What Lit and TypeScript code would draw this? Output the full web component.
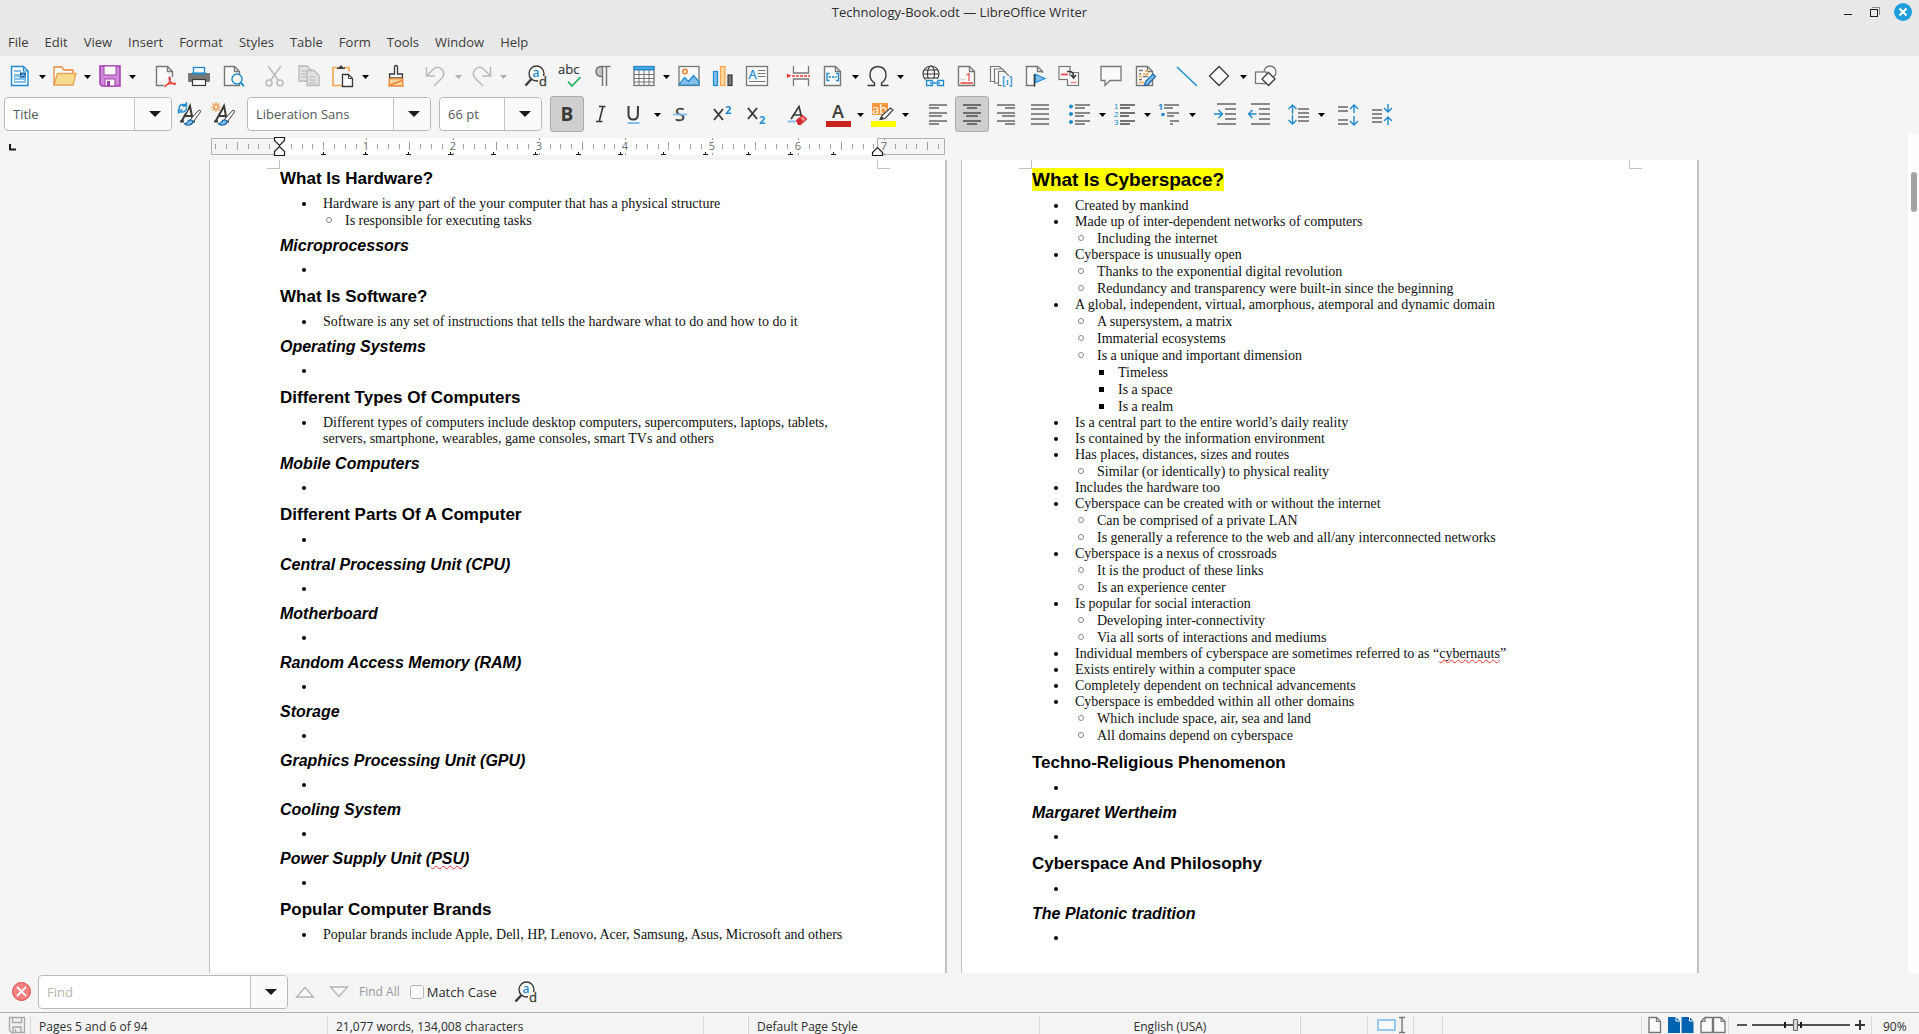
import { LitElement, html, css, svg, nothing } from "lit";
import type { TemplateResult } from "lit";
import { customElement } from "lit/decorators.js";
import { classMap } from "lit/directives/class-map.js";

const G = "#797774";
const D = "#3a3a38";
const B = "#1e8bcd";
const L = "#83beec";
const W = "#fafafa";
const F = "Open Sans, Noto Sans, sans-serif";

const pageShape = (x = 3.5, w = 16) => svg`
  <path d="M${x} 2.5h${w - 5}l5 5v14h-${w}z" fill=${W} stroke=${G} stroke-width="1.4" />
  <path d="M${x + w - 5} 2.5v5h5" fill="none" stroke=${G} stroke-width="1.4" />`;

const hLines = (rows: number[][], color = G, sw = 2) =>
  rows.map(([x1, x2, y]) => svg`<path d="M${x1} ${y}H${x2}" stroke=${color} stroke-width=${sw} />`);

const arrowUp = (x: number, y1: number, y2: number) => svg`
  <path d="M${x} ${y2}V${y1}M${x - 4} ${y1 + 4}L${x} ${y1}l4 4" fill="none" stroke=${B} stroke-width="1.4" />`;
const arrowDown = (x: number, y1: number, y2: number) => svg`
  <path d="M${x} ${y1}V${y2}M${x - 4} ${y2 - 4}L${x} ${y2}l4 -4" fill="none" stroke=${B} stroke-width="1.4" />`;

const findIcon = svg`
  <circle cx="12.500" cy="9.500" r="7.500" fill=${W} stroke=${D} stroke-width="1.400" />
  <rect x="14" y="12" width="10" height="11" fill="#f5f5f5" />
  <path d="M7.500 15L1.500 21.500" stroke=${D} stroke-width="2.400" />
  <text x="8.500" y="13" font-family=${F} font-size="12" font-weight="600" fill=${B}>a</text>
  <text x="15" y="22" font-family=${F} font-size="13" fill=${D} stroke=${D} stroke-width="0.300">d</text>`;

const styleA = svg`
  <path d="M3 19.500h4M14 19.500h4M4.500 19.500L13 4l3 15.500M8 14h7" fill="none" stroke=${D} stroke-width="2" />
  <path d="M13 18L20.500 9.500q2-2 2.800-1q.7 1-.8 3L16 20z" fill=${W} stroke=${D} stroke-width="1" />
  <path d="M7.500 21.500q3.500-.5 4-3q3-1.500 4.500 1q0 3-4.500 3.500q-3 .3-4-1.500z" fill=${L} stroke="#0c5fa8" stroke-width="1.200" />`;

const ICONS: Record<string, TemplateResult | TemplateResult[]> = {
  new: svg`<path d="M3.500 2.500h12l4.500 4.500v14.500h-16.500z" fill=${W} stroke=${B} stroke-width="1.400" />
    <path d="M15.500 2.500v4.500h4.500" fill="none" stroke=${B} stroke-width="1.200" />
    <path d="M6 6h7v2h-7z M6 10h6v2h-6z M6 10h12v9h-12z" fill=${L} />
    <rect x="12" y="8.500" width="6" height="5" fill="#1565a8" /><path d="M13 12.500l2-2 2 2" stroke="#fff" fill="none" />
    <path d="M7 13.500h4M7 16.500h9" stroke="#fff" />`,
  open: svg`<path d="M1 21V3h8l2 3h9v3.500" fill=${W} stroke="#e8863a" stroke-width="1.300" />
    <path d="M1 21L4.500 9.500h18.500L20 21z" fill="#f8db8f" stroke="#e8a352" stroke-width="1.300" />`,
  save: svg`<path d="M2 2h20v20h-18l-2-2z" fill="#d08bd8" stroke="#a03fae" stroke-width="1.500" />
    <rect x="6" y="2" width="12" height="9" fill="#fafafa" stroke="#a03fae" />
    <rect x="7" y="15" width="10" height="7" fill="#fafafa" stroke="#a03fae" /><rect x="9" y="17" width="3" height="5" fill="#a03fae" />`,
  pdf: svg`${pageShape()}<rect x="11" y="13" width="12" height="10" fill="#f5f5f5" />
    <path d="M17 13q-1.500 0-.5 3q1.200 3.500 6 4.500M17.500 13.500q0 5-6 9.500M12 21.500q4-2.500 11-2" fill="none" stroke="#ed3d3b" stroke-width="1.300" />`,
  print: svg`<rect x="6.500" y="3.500" width="11" height="6" fill=${W} stroke=${B} stroke-width="1.300" />
    <rect x="1" y="9" width="22" height="9" rx="1" fill=${G} /><path d="M5 9.500h14" stroke=${B} stroke-width="2" />
    <rect x="5.500" y="15.500" width="13" height="6" fill=${W} stroke=${D} stroke-width="1.200" />`,
  preview: svg`${pageShape(3.5, 15)}<circle cx="16" cy="15" r="5" fill=${W} stroke=${B} stroke-width="1.400" />
    <path d="M19.500 18.500L23 22" stroke=${B} stroke-width="1.800" />`,
  cut: svg`<g fill="none" stroke="#bababa" stroke-width="1.500"><path d="M5 2l10.500 14.500M18 2L7.500 16.500" /><circle cx="6" cy="19" r="3" /><circle cx="17" cy="19" r="3" /></g>`,
  copy: svg`<g fill="#e2e2e2" stroke="#b8b8b8" stroke-width="1.300"><path d="M2 2h8l4 4v11h-12z" /><path d="M10 6.500h7l5 5v10h-12z" /></g>
    <path d="M4 7h5M4 10h5M4 13h5M12 13h7M12 16h7M12 19h7" stroke="#b8b8b8" />`,
  paste: svg`<path d="M7 3.500h-5v18h9M13 3.500h5v4" fill="none" stroke="#f2a850" stroke-width="1.700" />
    <path d="M6 5h8v-1.500h-2q-.5-2-2-2t-2 2h-2z" fill=${D} />
    <path d="M11.500 10.500h6l4 4v8h-10z" fill=${W} stroke=${D} stroke-width="1.300" /><path d="M17.500 10.500v4h4" fill="none" stroke=${D} />`,
  brush: svg`<path d="M10.500 10V3q0-1.500 1.500-1.500t1.500 1.500v7h5v4H5.500v-4z" fill=${W} stroke=${D} stroke-width="1.300" />
    <path d="M5.500 14.500h13l.5 7.500H5z" fill="#fbd59a" stroke="#e8863a" stroke-width="1.300" /><path d="M5 21.500l13-5" stroke="#e8863a" stroke-width="1.500" />`,
  undo: svg`<path d="M2.500 3v9h8.500M3 11.500L9 5.500q5-4.500 9 0q3.500 4 0 8.500L10 22" fill="none" stroke="#bababa" stroke-width="1.500" />`,
  redo: svg`<path d="M21.500 3v9h-8.500M21 11.500L15 5.500q-5-4.500-9 0q-3.500 4 0 8.500L14 22" fill="none" stroke="#bababa" stroke-width="1.500" />`,
  find: findIcon,
  spell: svg`<text x="0" y="10" font-family=${F} font-size="13" fill=${D} stroke=${D} stroke-width="0.200">abc</text>
    <path d="M10 17.500l4 4.500L22.500 13" fill="none" stroke="#1db35b" stroke-width="1.700" />`,
  pilcrow: svg`<path d="M10 12.500q-6 0-6-5t6-5z" fill="#c8c8c8" /><path d="M18.500 2.500H10q-6 0-6 5t6 5M10.500 2.500V22M14.500 2.500V22" fill="none" stroke=${G} stroke-width="1.500" />`,
  table: svg`<rect x="2" y="2.500" width="20" height="19" fill=${W} stroke=${G} stroke-width="1.300" />
    <path d="M2 10.500h20M2 14.500h20M2 18h20M7 6v15M12 6v15M17 6v15" stroke=${G} /><rect x="1.500" y="2" width="21" height="4.500" fill=${B} /><path d="M3 4h18" stroke=${L} />`,
  image: svg`<rect x="2" y="2.500" width="20" height="19" fill=${W} stroke=${G} stroke-width="1.300" />
    <path d="M2.500 21v-1l5-6.500 4 4 5-6 5.500 6v3.500z" fill=${L} stroke=${B} stroke-width="1.200" /><circle cx="8" cy="7.500" r="2.300" fill="#fff3dc" stroke="#e8863a" stroke-width="1.500" />`,
  chart: svg`<rect x="2.500" y="7.500" width="4" height="14" fill=${L} stroke=${B} stroke-width="1.200" />
    <rect x="9.500" y="2.500" width="4.500" height="19" fill="#fbd59a" stroke="#f2a850" stroke-width="1.200" /><rect x="17" y="11" width="4" height="10.500" fill=${G} stroke=${D} stroke-width="1.200" />`,
  textbox: svg`<rect x="1.500" y="2.500" width="21" height="19" fill=${W} stroke=${G} stroke-width="1.300" />
    <text x="3.500" y="15" font-family=${F} font-size="13" fill=${B} stroke=${B} stroke-width="0.300">A</text>
    <path d="M13 6.500h7.500M13 9.500h7.500M13 12.500h7.500M4 17.500h16.500" stroke=${G} stroke-width="1.200" />`,
  pagebreak: svg`<path d="M6.500 2v7h15v-7M6.500 22v-7h15v7" fill=${W} stroke=${G} stroke-width="1.300" />
    <path d="M0 9.500v4.500l4.500-2.200z" fill="#ed3d3b" /><path d="M5 12h18" stroke="#ed3d3b" stroke-width="1.500" stroke-dasharray="3 1" />`,
  field: svg`${pageShape()}<path d="M8.500 9.500h-2.500v7h2.500M15 9.500h2.500v7h-2.500" fill="none" stroke=${B} stroke-width="1.300" /><path d="M7.500 13h8.500" stroke=${B} stroke-width="1.500" stroke-dasharray="2.500 1" />`,
  omega: svg`<path d="M1.500 21.500h7v-2.500q-4.500-3-4.500-8q0-8 8-8.500q8 .5 8 8.500q0 5-4.500 8v2.500h7" fill="none" stroke=${D} stroke-width="1.400" />`,
  link: svg`<g fill="none" stroke=${D} stroke-width="1.100"><circle cx="10" cy="10" r="8" /><ellipse cx="10" cy="10" rx="3.500" ry="8" /><path d="M2 10h16M3 6h14M3 14h14" /></g>
    <rect x="4.500" y="15" width="19" height="8.500" fill="#f5f5f5" />
    <path d="M11.500 16.500h-6v5h6v-1.500M11.500 18v-1.500M16.500 16.500h6v5h-6v-1.500M16.500 18v-1.500M9 19h10" fill="none" stroke=${B} stroke-width="1.300" />`,
  footnote: svg`${pageShape()}<path d="M5.500 19h12.500" stroke="#ed6d6b" stroke-width="2" /><path d="M5.500 15.500h5" stroke="#d0d0d0" stroke-width="1.500" />
    <text x="10.500" y="16.500" font-family=${F} font-size="11" font-weight="600" fill="#ee5a58">1</text>`,
  endnote: svg`<g fill=${W} stroke=${G} stroke-width="1.200"><path d="M1.500 2.500h9l3 3v12h-12z" /><path d="M5.500 5h8l3 3v11h-11z" /><path d="M9.500 7.500h6l4 4v10h-10z" /></g>
    <rect x="13" y="12" width="11" height="11" fill="#f5f5f5" /><path d="M16.500 13h-2v9h2M20.500 13h2v9h-2M18.500 16v5" fill="none" stroke="#4fa3dc" stroke-width="1.500" />`,
  bookmark: svg`${pageShape()}<rect x="11" y="9" width="12" height="14" fill="#f5f5f5" /><path d="M11.500 10v12.500" stroke=${D} stroke-width="1.700" /><path d="M12.500 10.500v8l9.500-4z" fill=${L} stroke=${B} stroke-width="1.200" />`,
  crossref: svg`<rect x="2" y="2.500" width="11" height="13" fill=${W} stroke=${G} stroke-width="1.200" /><path d="M4 10.500h7" stroke="#ee5a58" stroke-width="2" />
    <path d="M10.500 15.500v6h11v-13h-6" fill=${W} stroke=${G} stroke-width="1.200" /><path d="M13.500 18.500h6" stroke="#ee8a88" stroke-width="1.500" />
    <path d="M10 7.500h2.500q4 0 4 5M14 11l2.500 3 2.500-3" fill="none" stroke=${D} stroke-width="1.500" />`,
  comment: svg`<path d="M2 2.500h20v14h-11l-5 5v-5h-4z" fill=${W} stroke=${G} stroke-width="1.300" />`,
  track: svg`${pageShape()}<path d="M6 6.500h4M6 10h2M10 12.500h5M6 15.500h3" stroke=${G} stroke-width="1.500" /><path d="M12 7h3M10 10h6M6 12.500h3M6 18.500h5" stroke="#f2a850" stroke-width="1.500" />
    <path d="M11.500 21.500l1-4L20 10l2.500 2.500-7.500 8z" fill=${L} stroke="#1565a8" stroke-width="1.200" />`,
  line: svg`<path d="M2 3l20 19" stroke=${B} stroke-width="1.400" />`,
  diamond: svg`<path d="M10 2.500l9.500 9.500-9.500 9.500-9.500-9.500z" fill=${W} stroke=${D} stroke-width="1.300" />`,
  shapes: svg`<g fill=${W} stroke=${G} stroke-width="1.300"><circle cx="16" cy="8" r="6" /><rect x="1.500" y="8" width="11" height="11.500" /><path d="M14.500 8.500l6.500 6.500-6.500 6.500-6.500-6.500z" stroke=${D} /></g>`,
  styleUpdate: svg`${styleA}<circle cx="5.500" cy="6" r="5.500" fill="#f5f5f5" /><path d="M2 7q0-4.500 4-4.500h3M9.500 0v4h-4M9.500 5.500q0 4.500-4 4.500h-4M1.500 11.500V8h4" fill="none" stroke=${B} stroke-width="1.400" />`,
  styleNew: svg`${styleA}<circle cx="5" cy="5" r="5.500" fill="#f5f5f5" /><path d="M5 0v10M0 5h10M1.500 1.500l7 7M8.500 1.500l-7 7" stroke="#f08c3a" stroke-width="1.200" /><circle cx="5" cy="5" r="2" fill="#fff" stroke="#f08c3a" />`,
  bold: svg`<text x="5.500" y="18.500" font-family=${F} font-size="19" font-weight="700" fill=${D}>B</text>`,
  italic: svg`<path d="M10 4.500h6.500M7 19.500h6.500M14 4.500l-3.800 15" fill="none" stroke=${D} stroke-width="1.600" />`,
  underline: svg`<path d="M5.500 4v8.500q0 5 4.700 5t4.700-5V4" fill="none" stroke=${D} stroke-width="2" /><path d="M4.500 21h12" stroke=${L} stroke-width="2" />`,
  strike: svg`<text x="7" y="18.500" font-family=${F} font-size="18" fill=${D} stroke=${D} stroke-width="0.400">S</text><path d="M5 12.500h14" stroke=${L} stroke-width="1.800" />`,
  superscript: svg`<path d="M4 7l9 11M13 7L4 18" stroke=${D} stroke-width="1.900" /><text x="15" y="12" font-family=${F} font-size="11" font-weight="700" fill=${B}>2</text>`,
  subscript: svg`<path d="M4 6l9 11M13 6L4 17" stroke=${D} stroke-width="1.900" /><text x="15" y="22" font-family=${F} font-size="11" font-weight="700" fill=${B}>2</text>`,
  clear: svg`<path d="M5 17L13 4.500l2.500 10M8 13h6.500" fill="none" stroke=${D} stroke-width="1.700" /><path d="M1.500 19.500h8" stroke=${L} stroke-width="2" />
    <path d="M10.500 18.500l6-5 4 3.500-6 5.500h-2z" fill="#f28f8d" stroke="#d3282b" stroke-width="1.200" /><path d="M11 18.500l3.500-2.500 2.500 3.500-3 2.500h-2z" fill="#d3282b" />`,
  fontColor: svg`<text x="6" y="16" font-family=${F} font-size="18" font-weight="600" fill=${D}>A</text><rect x="0" y="19" width="25" height="6" fill="#c9211e" />`,
  highlight: svg`<rect x="1" y="1" width="16" height="12" fill="#fb983f" /><text x="1" y="12" font-family=${F} font-size="13" fill="#fff">ab</text>
    <path d="M9 17.500l2-4L19.500 6l2.500 2-8 8.500z" fill=${W} stroke=${D} stroke-width="1.100" /><path d="M9 18l1.500-4 3 2.500z" fill=${D} /><rect x="0" y="19" width="25" height="6" fill="#ffff00" />`,
  alignLeft: svg`${hLines([[3, 21, 3], [3, 13, 6], [3, 21, 11], [3, 16, 14], [3, 21, 19], [3, 13, 22]], "#8b8987")}`,
  alignCenter: svg`${hLines([[3, 21, 3], [7, 17, 6], [3, 21, 11], [6, 18, 14], [3, 21, 19], [7, 17, 22]], "#6f6d6a")}`,
  alignRight: svg`${hLines([[3, 21, 3], [11, 21, 6], [3, 21, 11], [8, 21, 14], [3, 21, 19], [11, 21, 22]], "#8b8987")}`,
  justify: svg`${hLines([[3, 21, 3], [3, 21, 7], [3, 21, 12], [3, 21, 17], [3, 21, 22]], "#8b8987")}`,
  bullets: svg`${hLines([[7, 22, 3], [7, 17, 6], [7, 22, 11], [7, 16, 14], [7, 22, 19], [7, 17, 22]], "#8b8987")}
    <g fill=${B}><circle cx="3" cy="4.500" r="2" /><circle cx="3" cy="12" r="2" /><circle cx="3" cy="20" r="2" /></g>`,
  numbers: svg`${hLines([[7, 22, 3], [7, 17, 6], [7, 22, 11], [7, 16, 14], [7, 22, 19], [7, 17, 22]], D, 1.4)}
    <text fill=${B} font-family="Liberation Sans, Arial, sans-serif" font-size="8"><tspan x="1" y="7">1</tspan><tspan x="1" y="15">2</tspan><tspan x="1" y="23">3</tspan></text>`,
  outline: svg`${hLines([[6, 21, 3], [6, 15, 6], [9, 21, 11], [9, 16, 14], [12, 21, 19], [12, 15, 22]], "#8b8987")}
    <text x="0" y="8" font-family=${F} font-size="9" font-weight="700" fill=${B}>1</text><circle cx="5" cy="12.500" r="1.800" fill=${B} />`,
  indent: svg`${hLines([[4, 23, 2], [12, 23, 7], [12, 23, 12], [12, 23, 17], [4, 23, 22]], "#8b8987")}<path d="M1 12h8M5.500 8l4 4-4 4" fill="none" stroke=${B} stroke-width="1.400" />`,
  outdent: svg`${hLines([[4, 23, 2], [12, 23, 7], [12, 23, 12], [12, 23, 17], [4, 23, 22]], "#8b8987")}<path d="M1.500 12h8M5.500 8l-4 4 4 4" fill="none" stroke=${B} stroke-width="1.400" />`,
  spacing: svg`${arrowUp(5.5, 3, 12)}${arrowDown(5.5, 13, 22)}${hLines([[11, 22, 7], [11, 22, 11], [11, 22, 15], [11, 22, 19]], "#8b8987")}`,
  spaceInc: svg`${hLines([[0, 10, 5], [0, 10, 9], [0, 10, 18], [0, 10, 22]], "#8b8987")}${arrowUp(16, 3, 11)}${arrowDown(16, 14, 23)}`,
  spaceDec: svg`${hLines([[0, 10, 8], [0, 10, 12], [0, 10, 16], [0, 10, 20]], "#8b8987")}${arrowDown(16, 2, 10)}${arrowUp(16, 15, 23)}`,
};

interface Tool {
  icon: string;
  label: string;
  split?: boolean;
  pressed?: boolean;
  dim?: boolean;
}
type Item = Tool | "s" | "m" | "l";
const t = (icon: string, label: string, o: Partial<Tool> = {}): Tool => ({ icon, label, ...o });
const split = { split: true };

const STANDARD: Item[] = [
  t("new", "New", split), t("open", "Open", split), t("save", "Save", split), "l",
  t("pdf", "Export as PDF"), t("print", "Print"), t("preview", "Print Preview"), "m",
  t("cut", "Cut"), t("copy", "Copy"), t("paste", "Paste", split), "m",
  t("brush", "Clone Formatting"), "s",
  t("undo", "Undo", { split: true, dim: true }), t("redo", "Redo", { split: true, dim: true }), "l",
  t("find", "Find and Replace"), t("spell", "Check Spelling"), t("pilcrow", "Formatting Marks"), "s",
  t("table", "Insert Table", split), t("image", "Insert Image"), t("chart", "Insert Chart"), t("textbox", "Insert Text Box"), "m",
  t("pagebreak", "Insert Page Break"), t("field", "Insert Field", split), t("omega", "Special Character", split), "l",
  t("link", "Insert Hyperlink"), t("footnote", "Insert Footnote"), t("endnote", "Insert Endnote"), t("bookmark", "Insert Bookmark"), t("crossref", "Insert Cross-reference"), "m",
  t("comment", "Insert Comment"), t("track", "Track Changes"), "m",
  t("line", "Insert Line"), t("diamond", "Basic Shapes", split), t("shapes", "Draw Functions"),
];
const FORMATTING: Item[] = [
  t("bold", "Bold", { pressed: true }), t("italic", "Italic"), t("underline", "Underline", split), t("strike", "Strikethrough"), "m",
  t("superscript", "Superscript"), t("subscript", "Subscript"), "m",
  t("clear", "Clear Formatting"), "s",
  t("fontColor", "Font Color", split), t("highlight", "Highlighting Color", split), "l",
  t("alignLeft", "Align Left"), t("alignCenter", "Align Center", { pressed: true }), t("alignRight", "Align Right"), t("justify", "Justified"), "s",
  t("bullets", "Unordered List", split), t("numbers", "Ordered List", split), t("outline", "Outline", split), "l",
  t("indent", "Increase Indent"), t("outdent", "Decrease Indent"), "s",
  t("spacing", "Line Spacing", split), "s",
  t("spaceInc", "Increase Paragraph Spacing"), t("spaceDec", "Decrease Paragraph Spacing"),
];
const MENUS = ["File", "Edit", "View", "Insert", "Format", "Styles", "Table", "Form", "Tools", "Window", "Help"];

type Row = [1 | 2 | 3, string | TemplateResult];
interface Block {
  kind: "title" | "heading" | "sub";
  text: string | TemplateResult;
  rows: Row[];
}
const blk = (kind: Block["kind"], text: Block["text"], rows: Row[] = [[1, ""]]): Block => ({ kind, text, rows });
const typo = (s: string) => html`<span class="typo">${s}</span>`;

const LEFT: Block[] = [
  blk("heading", "What Is Hardware?", [
    [1, "Hardware is any part of the your computer that has a physical structure"],
    [2, "Is responsible for executing tasks"],
  ]),
  blk("sub", "Microprocessors"),
  blk("heading", "What Is Software?", [[1, "Software is any set of instructions that tells the hardware what to do and how to do it"]]),
  blk("sub", "Operating Systems"),
  blk("heading", "Different Types Of Computers", [
    [1, html`Different types of computers include desktop computers, supercomputers, laptops, tablets,<br />servers, smartphone, wearables, game consoles, smart TVs and others`],
  ]),
  blk("sub", "Mobile Computers"),
  blk("heading", "Different Parts Of A Computer"),
  blk("sub", "Central Processing Unit (CPU)"),
  blk("sub", "Motherboard"),
  blk("sub", "Random Access Memory (RAM)"),
  blk("sub", "Storage"),
  blk("sub", "Graphics Processing Unit (GPU)"),
  blk("sub", "Cooling System"),
  blk("sub", html`Power Supply Unit (${typo("PSU")})`),
  blk("heading", "Popular Computer Brands", [[1, "Popular brands include Apple, Dell, HP, Lenovo, Acer, Samsung, Asus, Microsoft and others"]]),
];
const RIGHT: Block[] = [
  blk("title", "What Is Cyberspace?", [
    [1, "Created by mankind"],
    [1, "Made up of inter-dependent networks of computers"],
    [2, "Including the internet"],
    [1, "Cyberspace is unusually open"],
    [2, "Thanks to the exponential digital revolution"],
    [2, "Redundancy and transparency were built-in since the beginning"],
    [1, "A global, independent, virtual, amorphous, atemporal and dynamic domain"],
    [2, "A supersystem, a matrix"],
    [2, "Immaterial ecosystems"],
    [2, "Is a unique and important dimension"],
    [3, "Timeless"],
    [3, "Is a space"],
    [3, "Is a realm"],
    [1, "Is a central part to the entire world’s daily reality"],
    [1, "Is contained by the information environment"],
    [1, "Has places, distances, sizes and routes"],
    [2, "Similar (or identically) to physical reality"],
    [1, "Includes the hardware too"],
    [1, "Cyberspace can be created with or without the internet"],
    [2, "Can be comprised of a private LAN"],
    [2, "Is generally a reference to the web and all/any interconnected networks"],
    [1, "Cyberspace is a nexus of crossroads"],
    [2, "It is the product of these links"],
    [2, "Is an experience center"],
    [1, "Is popular for social interaction"],
    [2, "Developing inter-connectivity"],
    [2, "Via all sorts of interactions and mediums"],
    [1, html`Individual members of cyberspace are sometimes referred to as “${typo("cybernauts")}”`],
    [1, "Exists entirely within a computer space"],
    [1, "Completely dependent on technical advancements"],
    [1, "Cyberspace is embedded within all other domains"],
    [2, "Which include space, air, sea and land"],
    [2, "All domains depend on cyberspace"],
  ]),
  blk("heading", "Techno-Religious Phenomenon"),
  blk("sub", "Margaret Wertheim"),
  blk("heading", "Cyberspace And Philosophy"),
  blk("sub", "The Platonic tradition"),
];

@customElement("app-root")
export class AppRoot extends LitElement {
  static styles = css`
    :host {
      display: flex;
      flex-direction: column;
      height: 100vh;
      overflow: hidden;
      background: #f5f5f5;
      color: #2e2e2e;
      font: 13px/18px "Open Sans", "Noto Sans", sans-serif;
    }
    *, ::before { box-sizing: border-box; }
    button {
      display: inline-flex;
      align-items: center;
      justify-content: center;
      border: 0;
      padding: 0;
      background: none;
      color: inherit;
      font: inherit;
    }
    svg { display: block; flex: none; overflow: visible; }
    h1, h2, h3, ul { margin: 0; padding: 0; }

    .titlebar {
      display: grid;
      grid-template-columns: 1fr auto 1fr;
      align-items: center;
      height: 24px;
      background: #e8e8e8;
    }
    .title { grid-column: 2; font-size: 13px; }
    .winbtns { display: flex; justify-content: flex-end; gap: 11px; padding-right: 7px; }
    .menubar { display: flex; gap: 16px; height: 32px; padding: 3px 8px 0; background: #e8e8e8; }
    .menubar button { color: #3c3c3c; }

    .toolbar { display: flex; align-items: center; padding-left: 3px; flex: none; }
    .standard { height: 40px; }
    .formatting { height: 36px; padding-left: 4px; }
    .tool { width: 34px; height: 36px; }
    .pressed { background: #cfcfcf; border: 1px solid #acacac; border-radius: 3px; }
    .split { display: flex; }
    .drop { width: 11px; height: 36px; }
    .s { width: 6px; }
    .m { width: 8px; }
    .l { width: 10px; }

    .combo {
      display: flex;
      height: 34px;
      border: 1px solid #b9b9b9;
      border-radius: 4px;
      background: #fff;
      overflow: hidden;
    }
    .combo input {
      flex: 1;
      min-width: 0;
      border: 0;
      padding: 0 8px;
      background: none;
      color: #55585a;
      font: inherit;
      outline: 0;
    }
    .combo input::placeholder { color: #b4b4b4; }
    .combo button { width: 37px; padding-left: 3px; border-left: 1px solid #c4c4c4; background: #fafafa; }
    .style-box { width: 168px; }
    .font-box { width: 184px; margin: 0 8px 0 7px; }
    .size-box { width: 103px; margin-right: 8px; }
    .find-box { width: 250px; }

    .work { display: flex; flex: 1; min-height: 0; }
    .canvas { flex: 1; display: flex; flex-direction: column; min-width: 0; }
    .ruler-row, .pages {
      display: grid;
      grid-template-columns: 1fr auto 1fr;
    }
    .ruler-row { height: 28px; flex: none; }
    .tabkind { padding: 11px 0 0 9px; }
    .spread { display: grid; grid-template-columns: 738px 738px; column-gap: 14px; }
    .ruler { padding: 4px 0 0 2px; }
    .pages { flex: 1; min-height: 0; }
    .pages .spread { grid-column: 2; min-height: 0; }
    .page {
      position: relative;
      overflow: hidden;
      padding: 8px 68px 0 70px;
      border-left: 1px solid #c2c2c2;
      border-right: 2px solid #c2c2c2;
      background: #fff;
      color: #000;
    }
    .corner { position: absolute; top: 0; width: 13px; height: 9px; border-bottom: 1px solid #c2c2c2; }
    .corner-l { left: 57px; border-right: 1px solid #c2c2c2; }
    .corner-r { left: 667px; border-left: 1px solid #c2c2c2; }

    .head-title, .head-heading, .head-sub {
      font-family: "Liberation Sans", Arial, sans-serif;
      font-weight: 700;
    }
    .head-title { margin-bottom: 7px; font-size: 19px; line-height: 23px; }
    .head-title mark { display: inline-block; background: #ff0; color: #000; }
    .head-heading { margin: 8px 0 6px; font-size: 17px; line-height: 22px; }
    .head-sub { margin: 6px 0; font-size: 16px; line-height: 21px; font-style: italic; }
    .first { margin-top: 0; }
    .list { list-style: none; font: 14px/17px "Liberation Serif", "Times New Roman", serif; }
    .row { display: flex; color: #111; }
    .row::before { content: ""; flex: none; }
    .lv1 { line-height: 16px; min-height: 16px; }
    .lv1::before { width: 4px; height: 4px; margin: 6px 17px 0 22px; border-radius: 50%; background: #000; }
    .lv2::before { width: 6px; height: 6px; margin: 5px 13px 0 46px; border: 1px solid #8a8a8a; border-radius: 50%; }
    .lv3::before { width: 5px; height: 5px; margin: 6px 14px 0 67px; background: #000; }
    .typo { text-decoration: underline wavy #f33 1px; text-decoration-skip-ink: none; }

    .scroll { width: 11px; margin-top: 2px; padding: 38px 2px 0 3px; background: #fdfdfd; }
    .thumb { height: 40px; border-radius: 3px; background: #a3a3a3; }

    .findbar { display: flex; align-items: center; flex: none; height: 39px; padding: 0 0 2px 12px; }
    .findbar .find-box { margin-left: 7px; }
    .nav { width: 34px; height: 34px; }
    .findall { margin-left: 3px; font-size: 12px; color: #9a9a9a; }
    .match { display: flex; align-items: center; gap: 3px; margin: 0 12px 0 10px; }
    .match input {
      appearance: none;
      width: 14px;
      height: 14px;
      margin: 0;
      border: 1px solid #b9b9b9;
      border-radius: 3px;
      background: #fff;
    }

    .status {
      display: grid;
      grid-template-columns: 31px 297fr 376fr 45px 291fr 261fr 67px 46px 29px 199fr 87px 143px 47px;
      flex: none;
      height: 22px;
      padding-top: 3px;
      border-top: 1px solid #b0b0b0;
      background: #f4f4f4;
      font-size: 12px;
      line-height: 21px;
      white-space: nowrap;
    }
    .cell { display: flex; height: 18px; padding-left: 8px; border-right: 1px solid #d8d8d8; overflow: visible; }
    .cell:last-child { border-right: 0; padding-left: 11px; }
    .mid { justify-content: center; padding-left: 0; }
    .views { gap: 6px; padding-left: 6px; }
    .zoomer { align-items: center; gap: 5px; }
  `;

  private icon(name: string) {
    return html`<svg width="24" height="26" viewBox="0 0 24 26" aria-hidden="true">${svg`<g transform="translate(0 1)">${ICONS[name]}</g>`}</svg>`;
  }

  private tri(big = false, color = "#000") {
    return big
      ? html`<svg width="12" height="6" viewBox="0 0 12 6"><path d="M0 0h12l-6 6z" fill="#1c1c1c" /></svg>`
      : html`<svg width="7" height="6" viewBox="0 0 7 6"><path d="M0 2h7l-3.500 4z" fill=${color} /></svg>`;
  }

  private item(i: Item) {
    if (typeof i === "string") return html`<span class=${i}></span>`;
    const main = html`<button class=${classMap({ tool: true, pressed: !!i.pressed })} aria-label=${i.label} aria-pressed=${i.pressed ? "true" : nothing}>
      ${this.icon(i.icon)}
    </button>`;
    return i.split
      ? html`<span class="split">${main}<button class="drop" aria-label=${i.label + " options"}>${this.tri(false, i.dim ? "#b0b0b0" : "#000")}</button></span>`
      : main;
  }

  private combo(cls: string, label: string, value: string, placeholder = "") {
    return html`<div class="combo ${cls}">
      <input type="text" aria-label=${label} .value=${value} placeholder=${placeholder} />
      <button aria-label=${label + " list"}>${this.tri(true)}</button>
    </div>`;
  }

  private ruler() {
    const inch = 86.3;
    const ticks: TemplateResult[] = [];
    for (let n = -6; n <= 61; n++) {
      const x = Math.round(69 + (n * inch) / 8) + 0.5;
      if (n === 0 || x > 731) continue;
      if (n % 8 === 0) {
        ticks.push(svg`<path d="M${x} 2v2M${x} 17v2" stroke="#9a9a9a" />
          <text x=${x - 0.5} y="14" text-anchor="middle" font-family=${F} font-size="11" fill="#6a6a6a">${n / 8}</text>`);
      } else {
        ticks.push(n % 4 === 0 ? svg`<path d="M${x} 6v8" stroke="#a0a0a0" />` : svg`<path d="M${x} 8v5" stroke="#a0a0a0" />`);
      }
    }
    const stops: TemplateResult[] = [];
    for (let n = 1; n <= 13; n++) {
      const x = Math.round(69 + n * 42.5);
      stops.push(svg`<path d="M${x} 16h1v2h2v1h-5v-1h2z" fill="#1c1c1c" />`);
    }
    return html`<svg width="736" height="22" viewBox="0 0 736 22" role="img" aria-label="Ruler">
      <rect x="69" y="2" width="597" height="17" fill="#fff" />
      <path d="M69 2.500H.5v16H69M666.500 18.500V2.500H733.500v16h-67" fill="none" stroke="#b0b0b0" />
      ${ticks}${stops}
      <g fill="#fff" stroke="#1c1c1c" stroke-width="1.200">
        <path d="M63.500 1.500h10v3l-5 5-5-5z" /><path d="M63.500 19.500h10v-4l-5-5-5 5z" /><path d="M661.500 19.500h10v-3l-5-5-5 5z" />
      </g>
    </svg>`;
  }

  private block(b: Block, first: boolean) {
    const cls = `head-${b.kind}${first ? " first" : ""}`;
    const head =
      b.kind === "title"
        ? html`<h1 class=${cls}><mark>${b.text}</mark></h1>`
        : b.kind === "heading"
          ? html`<h2 class=${cls}>${b.text}</h2>`
          : html`<h3 class=${cls}>${b.text}</h3>`;
    return html`${head}
      <ul class="list">
        ${b.rows.map(([lv, text]) => html`<li class="row lv${lv}"><span>${text}</span></li>`)}
      </ul>`;
  }

  private page(blocks: Block[]) {
    return html`<article class="page">
      <i class="corner corner-l"></i><i class="corner corner-r"></i>
      ${blocks.map((b, i) => this.block(b, i === 0))}
    </article>`;
  }

  render() {
    return html`
      <header class="titlebar">
        <span class="title">Technology-Book.odt — LibreOffice Writer</span>
        <div class="winbtns">
          <button aria-label="Minimize"><svg width="16" height="18" viewBox="0 0 16 18"><path d="M4 11.500h8" stroke="#1c1c1c" /></svg></button>
          <button aria-label="Restore"><svg width="16" height="18" viewBox="0 0 16 18"><path d="M5 4.500h7.500v7.500" fill="none" stroke="#8a8a8a" /><rect x="3.500" y="6.500" width="7" height="7" fill="none" stroke="#1c1c1c" /></svg></button>
          <button aria-label="Close"><svg width="18" height="18" viewBox="0 0 18 18"><circle cx="9" cy="9" r="9" fill="#1f9ede" /><path d="M5.500 5.500l7 7M12.500 5.500l-7 7" stroke="#fff" stroke-width="2.200" /></svg></button>
        </div>
      </header>
      <nav class="menubar">${MENUS.map((m) => html`<button>${m}</button>`)}</nav>
      <div class="toolbar standard">${STANDARD.map((i) => this.item(i))}</div>
      <div class="toolbar formatting">
        ${this.combo("style-box", "Paragraph style", "Title")}
        ${this.item(t("styleUpdate", "Update Style"))}${this.item(t("styleNew", "New Style"))}
        ${this.combo("font-box", "Font name", "Liberation Sans")}
        ${this.combo("size-box", "Font size", "66 pt")}
        ${FORMATTING.map((i) => this.item(i))}
      </div>
      <main class="work">
        <div class="canvas">
          <div class="ruler-row">
            <div class="tabkind"><svg width="8" height="8" viewBox="0 0 8 8"><path d="M1 1v5.500h6" fill="none" stroke="#1c1c1c" stroke-width="2" /></svg></div>
            <div class="spread"><div class="ruler">${this.ruler()}</div></div>
          </div>
          <div class="pages"><div class="spread">${this.page(LEFT)}${this.page(RIGHT)}</div></div>
        </div>
        <div class="scroll"><div class="thumb"></div></div>
      </main>
      <div class="findbar">
        <button aria-label="Close find bar"><svg width="19" height="19" viewBox="0 0 19 19"><circle cx="9.500" cy="9.500" r="9" fill="#f77f7f" stroke="#dd4a4a" /><path d="M5 5l9 9M14 5l-9 9" stroke="#fff" stroke-width="1.800" /></svg></button>
        ${this.combo("find-box", "Find text", "", "Find")}
        <button class="nav" aria-label="Find previous"><svg width="20" height="12" viewBox="0 0 20 12"><path d="M1.500 11L10 1.500l8.500 9.500z" fill="#f8f8f8" stroke="#b4b4b4" stroke-width="1.300" /></svg></button>
        <button class="nav" aria-label="Find next"><svg width="20" height="12" viewBox="0 0 20 12"><path d="M1.500 1L10 10.500l8.500-9.500z" fill="#f8f8f8" stroke="#b4b4b4" stroke-width="1.300" /></svg></button>
        <button class="findall">Find All</button>
        <label class="match"><input type="checkbox" />Match Case</label>
        <button class="tool" aria-label="Find and Replace">${this.icon("find")}</button>
      </div>
      <footer class="status">
        <span class="cell"><svg width="19" height="18" viewBox="0 0 19 18"><path d="M1.500 1.500h15v15h-13l-2-2z" fill="#f0f0f0" stroke="#a8a8a8" stroke-width="1.300" /><path d="M4.500 1.500v5h9v-5M5 16v-5h8v5M7.500 16v-3" fill="none" stroke="#a8a8a8" stroke-width="1.300" /></svg></span>
        <span class="cell">Pages 5 and 6 of 94</span>
        <span class="cell">21,077 words, 134,008 characters</span>
        <span class="cell"></span>
        <span class="cell">Default Page Style</span>
        <span class="cell mid">English (USA)</span>
        <span class="cell"></span>
        <span class="cell"><svg width="30" height="18" viewBox="0 0 30 18"><rect x="2" y="4" width="17" height="10" fill=${W} stroke=${L} stroke-width="1.600" /><path d="M23 1.500h6M23 16.500h6M26 1.500v15" stroke=${G} stroke-width="1.400" /></svg></span>
        <span class="cell"></span>
        <span class="cell"></span>
        <span class="cell views">
          <svg width="14" height="18" viewBox="0 0 14 18"><path d="M1 1.500h7.500l4 4v11h-11.500z" fill=${W} stroke=${G} stroke-width="1.400" /><path d="M8.500 1.500v4h4" fill="none" stroke=${G} stroke-width="1.200" /></svg>
          <svg width="26" height="18" viewBox="0 0 26 18"><path d="M0 1h8l4 4v12h-12zM13.500 1h8l4 4v12h-12z" fill="#0063b1" /><path d="M8 1v4h4M21.500 1v4h4" fill="none" stroke="#fff" /></svg>
          <svg width="26" height="18" viewBox="0 0 26 18"><path d="M12.500 1.500h-7.500l-4 4v11h11.500zM13.500 1.500h7.500l4 4v11h-11.500z" fill=${W} stroke=${G} stroke-width="1.400" /><path d="M5 1.500v4h-4M21 1.500v4h4" fill="none" stroke=${G} stroke-width="1.200" /></svg>
        </span>
        <span class="cell zoomer">
          <button aria-label="Zoom out"><svg width="10" height="10" viewBox="0 0 10 10"><path d="M0 5h10" stroke="#555" stroke-width="2" /></svg></button>
          <svg width="98" height="14" viewBox="0 0 98 14" role="img" aria-label="Zoom slider"><path d="M0 7h98" stroke="#1c1c1c" stroke-width="1.400" /><path d="M33 4v6M49 4v6" stroke="#1c1c1c" stroke-width="2" /><rect x="41.500" y="1.500" width="4" height="11" rx="1" fill="#ddd" stroke="#6a6a6a" stroke-width="1.200" /></svg>
          <button aria-label="Zoom in"><svg width="10" height="10" viewBox="0 0 10 10"><path d="M0 5h10M5 0v10" stroke="#333" stroke-width="2" /></svg></button>
        </span>
        <span class="cell">90%</span>
      </footer>
    `;
  }
}
